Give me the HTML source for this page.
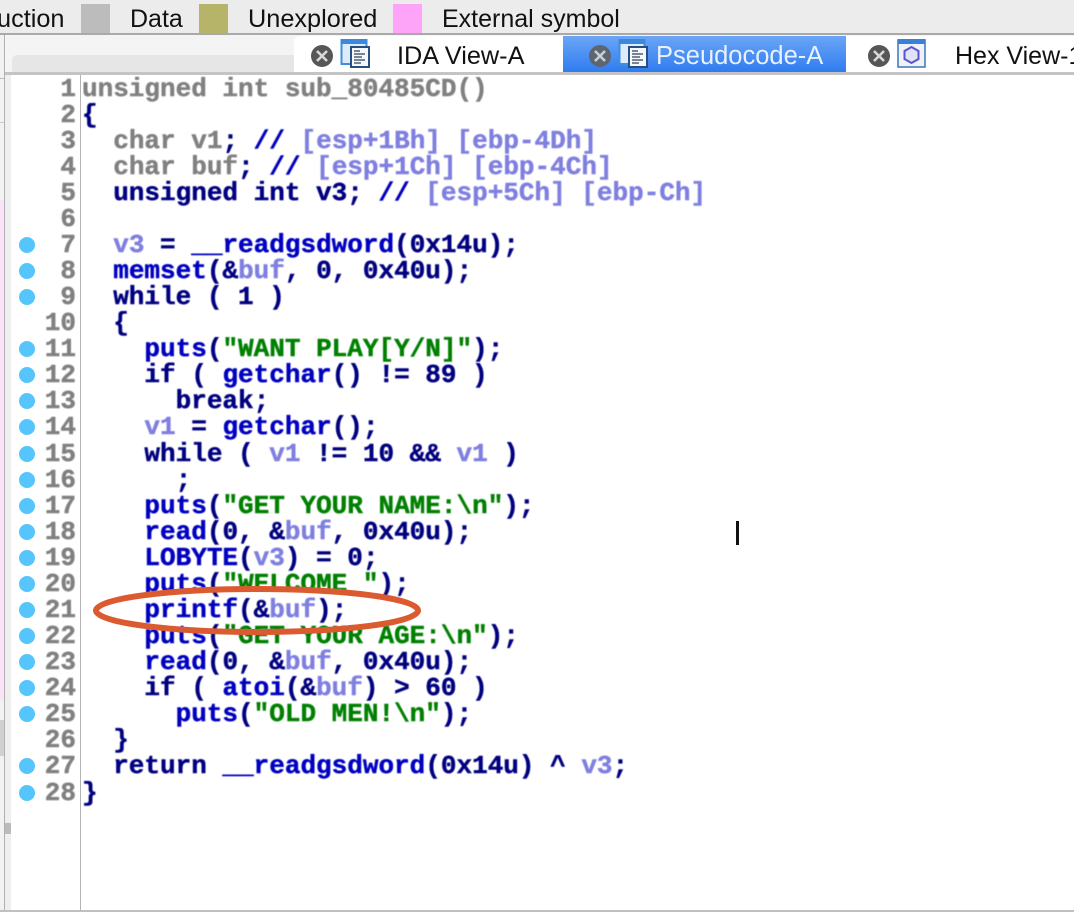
<!DOCTYPE html>
<html><head><meta charset="utf-8">
<style>
html,body{margin:0;padding:0;background:#fff;}
#p{position:relative;width:1074px;height:912px;overflow:hidden;background:#fff;font-family:"Liberation Sans",sans-serif;}
.a{position:absolute;}
.t{position:absolute;font-size:25px;line-height:30px;color:#111;white-space:pre;filter:blur(.3px);}
.w{font-size:25.3px;}
.l{position:absolute;left:82px;margin-top:1px;height:26px;font:bold 26px/26px "Liberation Mono",monospace;white-space:pre;color:#000080;-webkit-text-stroke:.45px currentColor;filter:blur(.4px);}
.n{position:absolute;left:30px;width:46px;margin-top:1px;text-align:right;font:bold 26px/26px "Liberation Mono",monospace;color:#808080;-webkit-text-stroke:.45px currentColor;filter:blur(.4px);}
.d{position:absolute;left:19px;width:16px;height:16px;border-radius:50%;background:#55c5fb;filter:blur(.3px);}
.g{color:#808080}.f{color:#0000c8}.v{color:#7f7fe0}.s{color:#008000}.c{color:#7f7fe0}.b{color:#0000c0}
</style></head><body><div id="p">
<div class="a" style="left:0;top:0;width:1074px;height:33px;background:#ececec"></div>
<div class="a" style="left:0;top:33px;width:1074px;height:2px;background:#a9a9a9"></div>
<div class="a" style="left:0;top:35px;width:1074px;height:40px;background:#f4f4f4"></div>
<div class="t w" style="left:-3px;top:4px">uction</div>
<div class="a" style="left:81px;top:4px;width:29px;height:29px;background:#bcbcbc"></div>
<div class="t" style="left:130px;top:4px">Data</div>
<div class="a" style="left:199px;top:4px;width:29px;height:29px;background:#b5b468"></div>
<div class="t w" style="left:248px;top:4px">Unexplored</div>
<div class="a" style="left:393px;top:4px;width:29px;height:29px;background:#fda4f8"></div>
<div class="t" style="left:442px;top:4px">External symbol</div>

<div class="a" style="left:12px;top:55px;width:282px;height:20px;background:#e6e6e6;border-radius:5px 0 0 0"></div>
<div class="a" style="left:294px;top:36px;width:269px;height:36px;background:#fff;border-radius:6px 0 0 0"></div>
<div class="a" style="left:563px;top:36px;width:283px;height:36px;background:linear-gradient(#6ba6f6,#2f7cf0)"></div>
<div class="a" style="left:846px;top:36px;width:228px;height:36px;background:#fff"></div>
<div class="a" style="left:0;top:72px;width:1074px;height:3px;background:#c4c4c4"></div>

<svg class="a" style="left:310px;top:42px" width="24" height="26" viewBox="0 0 24 26"><circle cx="12" cy="14" r="11" fill="#565656"/><path d="M7 9l10 10M17 9l-10 10" stroke="#d8d8d8" stroke-width="2.6"/></svg>
<svg class="a" style="left:340px;top:38px" width="32" height="32" viewBox="0 0 32 32"><rect x="1.5" y="2" width="25" height="24" fill="#dcecfa" stroke="#3f8ee0" stroke-width="2"/><rect x="1" y="1" width="26" height="5" fill="#3b88dd"/><rect x="11" y="9" width="18" height="20" fill="#f4f8fc" stroke="#25507f" stroke-width="2"/><path d="M14 13h6M14 16h11M14 19h8M14 22h11M14 25h7" stroke="#50606f" stroke-width="1.5"/></svg>
<div class="t w" style="left:397px;top:41px">IDA View-A</div>

<svg class="a" style="left:588px;top:42px" width="24" height="26" viewBox="0 0 24 26"><circle cx="12" cy="14" r="11" fill="#5d6670"/><path d="M7 9l10 10M17 9l-10 10" stroke="#c9ced4" stroke-width="2.6"/></svg>
<svg class="a" style="left:618px;top:38px" width="32" height="32" viewBox="0 0 32 32"><rect x="1.5" y="2" width="25" height="24" fill="#dcecfa" stroke="#3f8ee0" stroke-width="2"/><rect x="1" y="1" width="26" height="5" fill="#3b88dd"/><rect x="11" y="9" width="18" height="20" fill="#f4f8fc" stroke="#25507f" stroke-width="2"/><path d="M14 13h6M14 16h11M14 19h8M14 22h11M14 25h7" stroke="#50606f" stroke-width="1.5"/></svg>
<div class="t" style="left:656px;top:41px;color:#e9f1fd;font-size:25.5px">Pseudocode-A</div>

<svg class="a" style="left:867px;top:42px" width="24" height="26" viewBox="0 0 24 26"><circle cx="12" cy="14" r="11" fill="#565656"/><path d="M7 9l10 10M17 9l-10 10" stroke="#d8d8d8" stroke-width="2.6"/></svg>
<svg class="a" style="left:897px;top:38px" width="30" height="30" viewBox="0 0 30 30"><rect x="1" y="2" width="27" height="27" fill="#eef3fb" stroke="#3f74b8" stroke-width="1.5"/><rect x="1" y="1" width="27" height="5" fill="#3b80d8"/><path d="M14.5 9l7 4v8l-7 4-7-4v-8z" fill="#dfe4fb" stroke="#5a55c8" stroke-width="2"/></svg>
<div class="t" style="left:955px;top:41px">Hex View-1</div>

<div class="a" style="left:0;top:35px;width:4px;height:877px;background:#f2f2f2"></div>
<div class="a" style="left:4px;top:35px;width:1px;height:877px;background:#b0b0b0"></div>
<div class="a" style="left:0;top:78px;width:4px;height:1px;background:#bbb"></div>
<div class="a" style="left:0;top:122px;width:4px;height:1px;background:#ccc"></div>
<div class="a" style="left:0;top:200px;width:4px;height:500px;background:#fce4f8"></div>
<div class="a" style="left:0;top:720px;width:4px;height:36px;background:#d0d0d0"></div>
<div class="a" style="left:5px;top:75px;width:6px;height:837px;background:#efefef"></div>
<div class="a" style="left:5px;top:823px;width:6px;height:11px;background:#bbb"></div>
<div class="a" style="left:80px;top:75px;width:1px;height:837px;background:#b4b4b4"></div>
<div class="a" style="left:0;top:910px;width:1074px;height:2px;background:#c0c0c0"></div>

<div class="n" style="top:75px">1</div><div class="l" style="top:75px"><span class="g">unsigned int sub_80485CD()</span></div>
<div class="n" style="top:101px">2</div><div class="l" style="top:101px">{</div>
<div class="n" style="top:127px">3</div><div class="l" style="top:127px">  <span class="g">char v1</span>; <span class="b">//</span> <span class="c">[esp+1Bh] [ebp-4Dh]</span></div>
<div class="n" style="top:153px">4</div><div class="l" style="top:153px">  <span class="g">char buf</span>; <span class="b">//</span> <span class="c">[esp+1Ch] [ebp-4Ch]</span></div>
<div class="n" style="top:179px">5</div><div class="l" style="top:179px">  unsigned int v3; <span class="b">//</span> <span class="c">[esp+5Ch] [ebp-Ch]</span></div>
<div class="n" style="top:205px">6</div>
<div class="d" style="top:237px"></div><div class="n" style="top:231px">7</div><div class="l" style="top:231px">  <span class="v">v3</span> = <span class="b">__readgsdword</span>(0x14u);</div>
<div class="d" style="top:263px"></div><div class="n" style="top:257px">8</div><div class="l" style="top:257px">  <span class="b">memset</span>(&amp;<span class="v">buf</span>, 0, 0x40u);</div>
<div class="d" style="top:289px"></div><div class="n" style="top:283px">9</div><div class="l" style="top:283px">  while ( 1 )</div>
<div class="n" style="top:309px">10</div><div class="l" style="top:309px">  {</div>
<div class="d" style="top:341px"></div><div class="n" style="top:335px">11</div><div class="l" style="top:335px">    <span class="b">puts</span>(<span class="s">"WANT PLAY[Y/N]"</span>);</div>
<div class="d" style="top:367px"></div><div class="n" style="top:361px">12</div><div class="l" style="top:361px">    if ( <span class="b">getchar</span>() != 89 )</div>
<div class="d" style="top:393px"></div><div class="n" style="top:387px">13</div><div class="l" style="top:387px">      break;</div>
<div class="d" style="top:419px"></div><div class="n" style="top:413px">14</div><div class="l" style="top:413px">    <span class="v">v1</span> = <span class="b">getchar</span>();</div>
<div class="d" style="top:446px"></div><div class="n" style="top:440px">15</div><div class="l" style="top:440px">    while ( <span class="v">v1</span> != 10 &amp;&amp; <span class="v">v1</span> )</div>
<div class="d" style="top:472px"></div><div class="n" style="top:466px">16</div><div class="l" style="top:466px">      ;</div>
<div class="d" style="top:498px"></div><div class="n" style="top:492px">17</div><div class="l" style="top:492px">    <span class="b">puts</span>(<span class="s">"GET YOUR NAME:\n"</span>);</div>
<div class="d" style="top:524px"></div><div class="n" style="top:518px">18</div><div class="l" style="top:518px">    <span class="b">read</span>(0, &amp;<span class="v">buf</span>, 0x40u);</div>
<div class="d" style="top:550px"></div><div class="n" style="top:544px">19</div><div class="l" style="top:544px">    <span class="b">LOBYTE</span>(<span class="v">v3</span>) = 0;</div>
<div class="d" style="top:576px"></div><div class="n" style="top:570px">20</div><div class="l" style="top:570px">    <span class="b">puts</span>(<span class="s">"WELCOME "</span>);</div>
<div class="d" style="top:602px"></div><div class="n" style="top:596px">21</div><div class="l" style="top:596px">    <span class="b">printf</span>(&amp;<span class="v">buf</span>);</div>
<div class="d" style="top:628px"></div><div class="n" style="top:622px">22</div><div class="l" style="top:622px">    <span class="b">puts</span>(<span class="s">"GET YOUR AGE:\n"</span>);</div>
<div class="d" style="top:654px"></div><div class="n" style="top:648px">23</div><div class="l" style="top:648px">    <span class="b">read</span>(0, &amp;<span class="v">buf</span>, 0x40u);</div>
<div class="d" style="top:680px"></div><div class="n" style="top:674px">24</div><div class="l" style="top:674px">    if ( <span class="b">atoi</span>(&amp;<span class="v">buf</span>) &gt; 60 )</div>
<div class="d" style="top:706px"></div><div class="n" style="top:700px">25</div><div class="l" style="top:700px">      <span class="b">puts</span>(<span class="s">"OLD MEN!\n"</span>);</div>
<div class="n" style="top:726px">26</div><div class="l" style="top:726px">  }</div>
<div class="d" style="top:758px"></div><div class="n" style="top:752px">27</div><div class="l" style="top:752px">  return <span class="b">__readgsdword</span>(0x14u) ^ <span class="v">v3</span>;</div>
<div class="d" style="top:785px"></div><div class="n" style="top:779px">28</div><div class="l" style="top:779px">}</div>

<svg class="a" style="left:90px;top:582px" width="336" height="56" viewBox="0 0 336 56"><ellipse cx="167" cy="28.5" rx="161" ry="21.5" fill="none" stroke="#dc5a30" stroke-width="6"/></svg>
<div class="a" style="left:736px;top:521px;width:3px;height:24px;background:#111"></div>
</div></body></html>
